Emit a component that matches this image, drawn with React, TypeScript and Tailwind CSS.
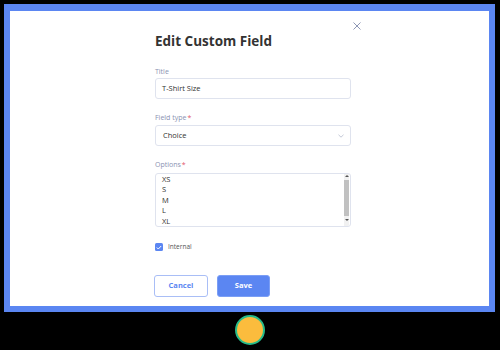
import React from "react";

const blue = "#5b86f2";

function FieldLabel({ text, required }: { text: string; required?: boolean }) {
  return (
    <div className="text-[7px] leading-[10px] text-[#8a92b2]">
      {text}
      {required && <span className="ml-[1px] text-[#e2566b]">*</span>}
    </div>
  );
}

function OptionsBox() {
  const options = ["XS", "S", "M", "L", "XL"];
  return (
    <div className="mt-[3px] flex h-[54px] w-full overflow-hidden rounded-[3px] border border-[#dfe3ee] bg-white">
      <div className="flex-1 pl-[6px] text-[7.5px] leading-[10.4px] text-[#333]">
        {options.map((o) => (
          <div key={o}>{o}</div>
        ))}
      </div>
      {/* scrollbar */}
      <div className="mr-[1px] flex w-[5px] flex-col items-center bg-[#f1f1f1] py-[1px]">
        <div className="h-0 w-0 border-x-[2px] border-b-[2px] border-x-transparent border-b-[#555]" />
        <div className="mt-[3px] w-full flex-1 bg-[#c1c1c1]" />
        <div className="mt-[3px] h-0 w-0 border-x-[2px] border-t-[2px] border-x-transparent border-t-[#555]" />
        <div className="h-[4px]" />
      </div>
    </div>
  );
}

export default function App() {
  return (
    <div className="h-[350px] w-[500px] bg-black font-['Open_Sans',sans-serif]">
      <div className="pl-[4px] pt-[4px]">
        <div className="h-[308px] w-[491px] border-[6px] border-t-[7px] border-[#5b86f2] bg-white">
          <div className="relative ml-[145px] w-[196px] pt-[20px]">
            <button className="absolute right-[-10px] top-[11px] text-[#8e97b5]" aria-label="Close">
              <svg width="8" height="8" viewBox="0 0 8 8" fill="none" stroke="currentColor" strokeWidth="1">
                <path d="M0.5 0.5 L7.5 7.5 M7.5 0.5 L0.5 7.5" />
              </svg>
            </button>

            <h2 className="text-[13.5px] font-bold leading-[20px] text-[#333]">Edit Custom Field</h2>

            <div className="mt-[16px]">
              <FieldLabel text="Title" />
              <div className="mt-[1px] flex h-[21px] items-center rounded-[3px] border border-[#dfe3ee] pl-[6px] text-[7.5px] text-[#333]">
                T-Shirt Size
              </div>
            </div>

            <div className="mt-[14px]">
              <FieldLabel text="Field type" required />
              <div className="mt-[2px] flex h-[21px] items-center justify-between rounded-[3px] border border-[#dfe3ee] pl-[7px] pr-[6px] text-[7.5px] text-[#333]">
                <span>Choice</span>
                <svg width="6" height="4" viewBox="0 0 6 4" fill="none" stroke="#b3b9cb" strokeWidth="0.8">
                  <path d="M0.5 0.8 L3 3.2 L5.5 0.8" />
                </svg>
              </div>
            </div>

            <div className="mt-[14px]">
              <FieldLabel text="Options" required />
              <OptionsBox />
            </div>

            <div className="mt-[16px] flex items-center gap-[5px]">
              <div className="flex h-[8px] w-[8px] items-center justify-center rounded-[1.5px] bg-[#5b86f2]">
                <svg width="6" height="5" viewBox="0 0 6 5" fill="none" stroke="white" strokeWidth="1">
                  <path d="M0.8 2.5 L2.3 4 L5.2 1" />
                </svg>
              </div>
              <span className="text-[6.5px] leading-[8px] text-[#555]">Internal</span>
            </div>

            <div className="-ml-[1px] mt-[24px] flex gap-[9px]">
              <button
                className="flex h-[22px] w-[54px] items-center justify-center rounded-[3px] border border-[#a9bef6] bg-white text-[7.5px] font-bold"
                style={{ color: blue }}
              >
                Cancel
              </button>
              <button className="flex h-[22px] w-[53px] items-center justify-center rounded-[3px] border border-[#7b9ef5] bg-[#5b86f2] text-[7.5px] font-bold text-white">
                Save
              </button>
            </div>
          </div>
        </div>
      </div>
      <div className="mt-[3px] flex justify-center">
        <div className="h-[30px] w-[30px] rounded-full border-[2px] border-[#26bb8a] bg-[#fbbc3d]" />
      </div>
    </div>
  );
}
